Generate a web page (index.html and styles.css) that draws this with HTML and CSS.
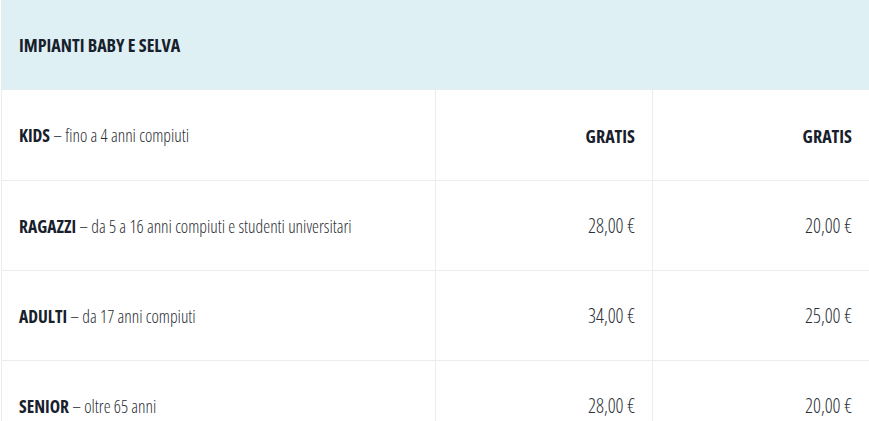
FILE: index.html
```html
<!DOCTYPE html>
<html lang="it">
<head>
<meta charset="utf-8">
<title>Impianti Baby e Selva</title>
<link rel="stylesheet" href="styles.css">
</head>
<body>
<div class="wrap">
<table class="prices">
  <colgroup>
    <col class="c-desc">
    <col class="c-price">
    <col class="c-price">
  </colgroup>
  <thead>
    <tr class="head">
      <th class="cell-title">IMPIANTI BABY E SELVA</th>
      <th></th>
      <th></th>
    </tr>
  </thead>
  <tbody>
    <tr>
      <td><strong>KIDS</strong> – fino a 4 anni compiuti</td>
      <td class="num"><strong>GRATIS</strong></td>
      <td class="num"><strong>GRATIS</strong></td>
    </tr>
    <tr>
      <td><strong>RAGAZZI</strong> – da 5 a 16 anni compiuti e studenti universitari</td>
      <td class="num">28,00 €</td>
      <td class="num">20,00 €</td>
    </tr>
    <tr>
      <td><strong>ADULTI</strong> – da 17 anni compiuti</td>
      <td class="num">34,00 €</td>
      <td class="num">25,00 €</td>
    </tr>
    <tr>
      <td><strong>SENIOR</strong> – oltre 65 anni</td>
      <td class="num">28,00 €</td>
      <td class="num">20,00 €</td>
    </tr>
  </tbody>
</table>
</div>
</body>
</html>
```

FILE: styles.css
```css
html, body {
  margin: 0;
  padding: 0;
  background: #ffffff;
}
.wrap {
  padding-left: 1px;
}
.prices {
  border-collapse: collapse;
  table-layout: fixed;
  width: 869px;
  font-family: "Open Sans", "DejaVu Sans Condensed", sans-serif;
  font-stretch: 75%;
  font-size: 17.5px;
  font-weight: 300;
  color: #2b2f36;
}
.c-desc { width: 434px; }
.c-price { width: 217px; }
.prices th, .prices td {
  border: 1px solid #ececec;
  padding: 0 17px;
  vertical-align: middle;
  text-align: left;
}
.head th {
  background: #dff0f4;
  height: 89px;
  border-top: none;
  border-color: #e3eef1;
  color: #17202b;
  font-weight: 700;
  font-size: 18px;
}
.prices tbody td {
  height: 89px;
}
.prices tbody tr:first-child td {
  height: 90px;
}
.prices strong {
  font-weight: 700;
  color: #17202b;
}
.prices td.num {
  text-align: right;
  font-size: 19.5px;
}
.prices td.num strong {
  font-size: 18px;
}
```
